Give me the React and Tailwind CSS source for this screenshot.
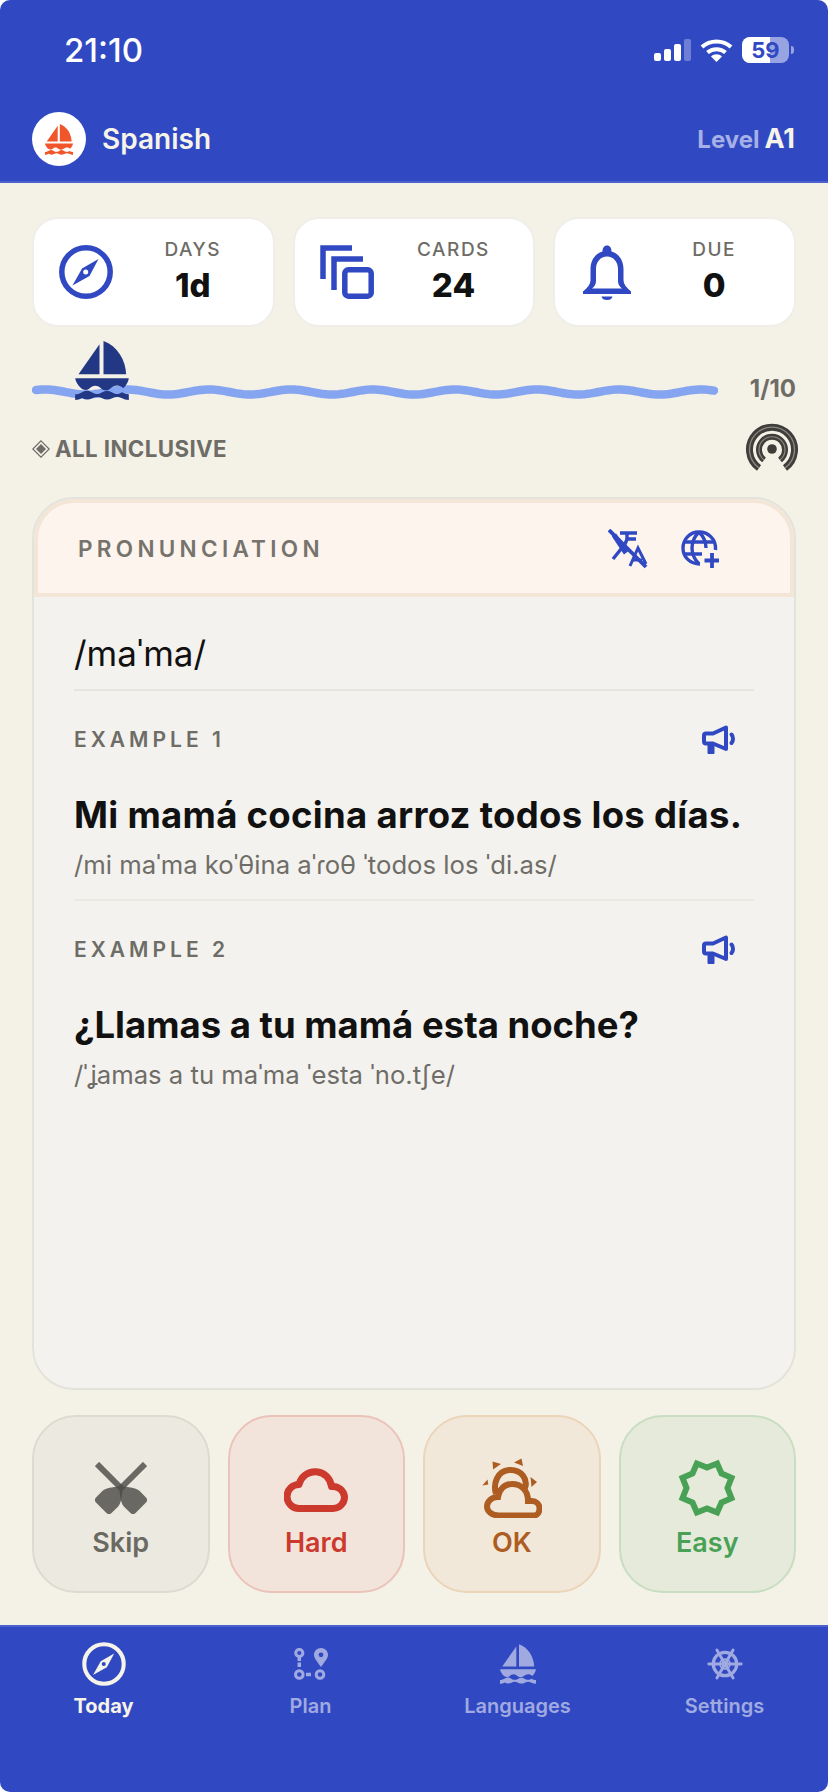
import React from "react";

const Boat = ({ color, className }) => (
  <svg viewBox="165 35 161 177" className={className} fill={color}>
    <path d="M238 45V135H175Z" />
    <path d="M250 35C292 50 316 92 318 135H250Z" />
    <path d="M165 147H326C324 158 319 168 309 177C299 166 283 166 270 178C262 184 252 184 244 178C233 166 218 166 207 178C199 184 189 182 183 177C173 168 167 158 165 147Z" />
    <path d="M165 195C173 195 180 192 187 188C197 182 207 184 215 189C226 196 236 196 246 189C256 183 266 183 275 189C286 196 296 196 305 189C312 192 319 195 326 195V212C318 212 311 210 304 206C295 202 286 202 276 207C266 212 256 212 246 207C236 202 226 202 216 207C206 212 196 212 186 206C180 209 172 212 165 212Z" />
  </svg>
);

const Compass = ({ color, hole, className, sw = 5.5 }) => (
  <svg viewBox="0 0 54 54" className={className}>
    <circle cx="27" cy="27" r="24.2" fill="none" stroke={color} strokeWidth={sw} />
    <path d="M39.500 14L30.500 31L13.500 40.500L23 23.500Z" fill={color} />
    <circle cx="26.700" cy="27" r="2.500" fill={hole} />
  </svg>
);

const Copies = ({ color, className }) => (
  <svg viewBox="0 0 54 54" className={className} fill="none" stroke={color} strokeWidth="5.5">
    <path d="M32 3H3V34" />
    <path d="M43 14H14V45" />
    <rect x="24.800" y="24.800" width="26.400" height="26.400" rx="3.500" />
  </svg>
);

const Bell = ({ color, className }) => (
  <svg viewBox="0 0 50 56" className={className}>
    <path d="M25 1.500C22 1.500 20.500 4 20.500 7.500C12.500 10 8.500 17 8.500 25V36C8.500 40 6 43.500 1 47.500V50H49V47.500C44 43.500 41.500 40 41.500 36V25C41.500 17 37.500 10 29.500 7.500C29.500 4 28 1.500 25 1.500ZM25 12.500C31.500 12.500 36 18 36 25V37C36 40 37.500 42.500 40 44.500H10C12.500 42.500 14 40 14 37V25C14 18 18.500 12.500 25 12.500Z" fill={color} fillRule="evenodd" />
    <path d="M19.500 52.500H30.500C30 55 28 56 25 56C22 56 20 55 19.500 52.500Z" fill={color} />
  </svg>
);

const Wave = () => {
  const w = 686;
  const pts = [];
  for (let x = 4; x <= w - 4; x += 3) {
    pts.push(`${x},${(8 + 2.5 * Math.cos(((x - 136) / 82) * 2 * Math.PI)).toFixed(2)}`);
  }
  return (
    <svg viewBox={`0 0 ${w} 16`} className="h-[16px] w-[686px]">
      <polyline points={pts.join(" ")} fill="none" stroke="#86A5F0" strokeWidth="8.5" strokeLinecap="round" strokeLinejoin="round" />
    </svg>
  );
};

const Radar = () => (
  <svg viewBox="0 0 54 54" className="h-[54px] w-[54px]" fill="none">
    <path d="M14 46A22.500 22.500 0 1 1 40 46" stroke="#3F3E3A" strokeWidth="7" />
    <path d="M14 46A22.500 22.500 0 1 1 40 46" stroke="#8A8880" strokeWidth="1.400" />
    <path d="M19 38A13 13 0 1 1 35 38" stroke="#3F3E3A" strokeWidth="6" />
    <path d="M19 38A13 13 0 1 1 35 38" stroke="#8A8880" strokeWidth="1.200" />
    <circle cx="27" cy="27" r="4.800" fill="#3F3E3A" />
  </svg>
);

const TranslateOff = ({ className }) => (
  <svg viewBox="0 0 40 40" className={className} fill="none" stroke="#3049C3" strokeWidth="3.400">
    <path d="M1 1L38 38" strokeWidth="3.800" />
    <path d="M5 30L17 15L20 8" />
    <path d="M12 4H29M19 4V10M19 10H28" />
    <path d="M6 6L18 24" strokeWidth="5" />
    <path d="M22 37L30 19L38 35" strokeWidth="3" />
    <path d="M25 31H34" strokeWidth="3" />
  </svg>
);

const GlobePlus = ({ className }) => (
  <svg viewBox="0 0 38 38" className={className} fill="none" stroke="#3049C3" strokeWidth="3.400">
    <path d="M34.500 20C35.500 9 27 2 18 2C8.500 2 2 9.500 2 18C2 27 9 34 19 34" />
    <path d="M18 2C13 7 11 12.500 11 18C11 23.500 13 29 18 34M18 2C23 7 25 12.500 25 18" />
    <path d="M3 12H33M3 24H21" />
    <path d="M31 23V38M23.500 30.500H38" strokeWidth="3.800" />
  </svg>
);

const Megaphone = ({ className }) => (
  <svg viewBox="0 0 34 30" className={className} fill="none" stroke="#3049C3">
    <path d="M4 8.500H11L24 2.500V24L11 18.500H4C2.800 18.500 2 17.700 2 16.500V10.500C2 9.300 2.800 8.500 4 8.500Z" strokeWidth="4" strokeLinejoin="round" />
    <path d="M6 19V28.500H12V19" fill="#3049C3" strokeWidth="1" strokeLinejoin="round" />
    <path d="M29.500 9.500C31.500 11.500 31.500 16 29.500 18" strokeWidth="4" strokeLinecap="round" />
  </svg>
);

const blade = "M26 22C24 27 15 35 15 41V50Q15 54 19 54H33Q37 54 37 50V41C37 35 28 27 26 22Z";
const Oars = () => (
  <svg viewBox="0 0 52 52" className="h-[52px] w-[52px]">
    <g transform="rotate(-45 26 26)" fill="#4A4943" opacity="0.8">
      <rect x="23" y="-8" width="6" height="34" />
      <path d={blade} />
    </g>
    <g transform="rotate(45 26 26)" fill="#4A4943" opacity="0.8">
      <rect x="23" y="-8" width="6" height="34" />
      <path d={blade} />
    </g>
  </svg>
);

const Cloud = () => (
  <svg viewBox="0 0 64 47" className="h-[47px] w-[64px]" fill="none" stroke="#CC3A2E" strokeWidth="7">
    <path d="M15 43.500H49A11.500 11.500 0 0 0 60.500 32A11.500 11.500 0 0 0 47.500 21.500A16.500 16.500 0 0 0 15 19.500A12 12 0 0 0 15 43.500Z" strokeLinejoin="round" />
  </svg>
);

const CloudSun = () => (
  <svg viewBox="0 0 60 60" className="h-[60px] w-[60px]" fill="none" stroke="#AD5C22">
    <path d="M14 36C11 26 15 13 27 12C40 11 46 22 43 30" strokeWidth="6" />
    <path d="M17 57.500H52C55.500 57.500 57.500 54 57.500 50.500C57.500 46 54 43 50 43H46C46 32 39 26 30 26C22 26 17 32 16 39C9 39 5 44 5 48.500C5 53.500 10 57.500 17 57.500Z" strokeWidth="6" fill="#F2E8DA" />
    <path d="M10.500 3.500L19 6L11 11.500Z" fill="#AD5C22" stroke="none" />
    <path d="M32 4.500L39.500 0.500L41 8Z" fill="#AD5C22" stroke="none" />
    <path d="M48.500 19L55 24L49.500 29Z" fill="#AD5C22" stroke="none" />
    <path d="M6 27L0 27L6 22Z" fill="#AD5C22" stroke="none" transform="rotate(-8 3 25)" />
  </svg>
);

const starPts = Array.from({ length: 16 }, (_, i) => {
  const a = (i * Math.PI) / 8 - Math.PI / 2;
  const r = i % 2 === 0 ? 20.5 : 26.5;
  return `${(29 + r * Math.cos(a)).toFixed(2)},${(29 + r * Math.sin(a)).toFixed(2)}`;
}).join(" ");

const Seal = () => (
  <svg viewBox="0 0 58 58" className="h-[58px] w-[58px]">
    <polygon points={starPts} fill="none" stroke="#49A156" strokeWidth="6" strokeLinejoin="miter" />
  </svg>
);

const PlanIcon = ({ className }) => (
  <svg viewBox="0 0 34 33" className={className} fill="none" stroke="#A0AAE0">
    <circle cx="5.300" cy="5" r="3.600" strokeWidth="3" />
    <path d="M5.300 9V13" strokeWidth="3.500" />
    <path d="M5.300 14.500V19" strokeWidth="3.500" />
    <circle cx="5.300" cy="26.500" r="3.800" strokeWidth="3" />
    <path d="M12 26.500H17" strokeWidth="3.500" />
    <circle cx="26" cy="26.500" r="3.800" strokeWidth="3" />
    <path d="M27 19C23.500 14 20 10.500 20 6.800C20 3 23 0 27 0C31 0 34 3 34 6.800C34 10.500 30.500 14 27 19Z" fill="#A0AAE0" stroke="none" />
    <circle cx="27" cy="6.800" r="2.400" fill="#3049C3" stroke="none" />
  </svg>
);

const Helm = ({ className }) => (
  <svg viewBox="0 0 40 40" className={className} fill="none" stroke="#A0AAE0" strokeLinecap="round">
    <circle cx="20" cy="20" r="13" strokeWidth="3.600" />
    <circle cx="20" cy="20" r="3.500" fill="#A0AAE0" stroke="none" />
    <path d="M2 20H38M11 4.500L29 35.500M29 4.500L11 35.500" strokeWidth="3.200" />
    <circle cx="20" cy="20" r="5.500" strokeWidth="2" />
  </svg>
);

const Stat = ({ icon, label, value }) => (
  <div className="flex h-[110px] items-center rounded-[26px] border-2 border-[#EFEEE9] bg-white pl-[25px]">
    <div className="flex w-[54px] justify-center">{icon}</div>
    <div className="flex flex-1 flex-col items-center pb-[2px]">
      <div className="text-[19px] leading-[24px] font-medium tracking-[1.5px] text-[#6E6C66]">{label}</div>
      <div className="mt-[4px] text-[33px] leading-[38px] font-extrabold text-[#111]">{value}</div>
    </div>
  </div>
);

const Example = ({ label, sentence, ipa, divider, tracking }) => (
  <div className={divider ? "border-b-2 border-[#EBE9E4] pb-[17px]" : ""}>
    <div className="flex h-[38px] items-center justify-between pr-[18px]">
      <div className="text-[21px] font-semibold tracking-[4px] text-[#6E6C66]">{label}</div>
      <Megaphone className="h-[30px] w-[34px]" />
    </div>
    <div className={`mt-[34px] text-[36.500px] leading-[44px] font-bold whitespace-nowrap text-[#111] ${tracking}`}>{sentence}</div>
    <div className="mt-[11px] text-[25.700px] leading-[34px] text-[#6F6D68]">{ipa}</div>
  </div>
);

const Action = ({ icon, label, classes }) => (
  <div className={`flex h-[178px] flex-col items-center rounded-[44px] border-2 ${classes}`}>
    <div className="mt-[40px] flex h-[62px] items-center justify-center">{icon}</div>
    <div className="mt-[9px] text-[27px] leading-[30px] font-semibold">{label}</div>
  </div>
);

const Tab = ({ icon, label, active }) => (
  <div className="flex flex-col items-center">
    <div className="flex h-[46px] items-center justify-center">{icon}</div>
    <div className={`mt-[6px] text-[20px] leading-[26px] ${active ? "font-bold text-[#F6F3E8]" : "font-semibold text-[#A0AAE0]"}`}>{label}</div>
  </div>
);

export default function App() {
  return (
    <div className="flex h-[1792px] w-[828px] flex-col overflow-hidden rounded-[10px] bg-[#F4F1E6] [font-family:Inter,'Noto_Sans',sans-serif]">
      <header className="h-[183px] shrink-0 border-b-2 border-[#4B62CE] bg-[#3049C3] text-white">
        <div className="flex h-[100px] items-center justify-between pr-[34px] pl-[64px]">
          <div className="text-[33px] leading-[40px] font-medium">21:10</div>
          <div className="flex items-center">
            <div className="flex h-[22px] items-end gap-[3px]">
              <div className="h-[8px] w-[7px] rounded-[2px] bg-white" />
              <div className="h-[12px] w-[7px] rounded-[2px] bg-white" />
              <div className="h-[17px] w-[7px] rounded-[2px] bg-white" />
              <div className="h-[22px] w-[7px] rounded-[2px] bg-white/30" />
            </div>
            <svg viewBox="0 0 33 24" className="ml-[9px] h-[24px] w-[33px]" fill="none" stroke="#fff" strokeWidth="4">
              <path d="M2 9C10 1.500 23 1.500 31 9" />
              <path d="M7.500 14.500C12.500 10 20.500 10 25.500 14.500" />
              <path d="M16.500 24L11 18.500C14 15.500 19 15.500 22 18.500Z" fill="#fff" stroke="none" />
            </svg>
            <div className="relative ml-[9px] h-[26px] w-[47px] overflow-hidden rounded-[8px] bg-white/50">
              <div className="h-full w-[28px] bg-white" />
              <div className="absolute inset-0 flex items-center justify-center text-[22px] leading-none font-bold text-[#3049C3]">59</div>
            </div>
            <div className="ml-[2px] h-[8px] w-[3px] rounded-r-[3px] bg-white/50" />
          </div>
        </div>
        <div className="mt-[12px] flex h-[54px] items-center justify-between pr-[33px] pl-[32px]">
          <div className="flex items-center">
            <div className="flex h-[54px] w-[54px] items-center justify-center rounded-full bg-white">
              <Boat color="#F0562A" className="h-[31px] w-[28px]" />
            </div>
            <div className="ml-[16px] text-[28px] leading-[36px] font-semibold text-[#F6F3E8]">Spanish</div>
          </div>
          <div className="flex items-baseline">
            <span className="text-[24px] font-bold text-[#A6B0E6]">Level</span>
            <span className="ml-[5px] text-[27px] font-bold text-[#F6F3E8]">A1</span>
          </div>
        </div>
      </header>

      <main className="flex min-h-0 flex-1 flex-col px-[32px] pt-[34px]">
        <div className="grid grid-cols-3 gap-[18px]">
          <Stat icon={<Compass color="#3049C3" hole="#fff" className="h-[54px] w-[54px]" />} label="DAYS" value="1d" />
          <Stat icon={<Copies color="#3049C3" className="h-[54px] w-[54px]" />} label="CARDS" value="24" />
          <Stat icon={<Bell color="#3049C3" className="h-[56px] w-[50px]" />} label="DUE" value="0" />
        </div>

        <div className="relative mt-[14px] flex h-[60px] items-end justify-between">
          <div className="pb-[1px]"><Wave /></div>
          <div className="text-[24px] leading-[24px] font-bold text-[#6E6C66]">1/10</div>
          <Boat color="#223885" className="absolute top-0 left-[43px] h-[59px] w-[54px]" />
        </div>

        <div className="mt-[21px] flex h-[54px] items-center justify-between">
          <div className="flex items-center">
            <svg viewBox="0 0 18 18" className="h-[18px] w-[18px]">
              <path d="M9 .8L17.200 9L9 17.200L.8 9Z" fill="none" stroke="#6E6C66" strokeWidth="1.200" />
              <path d="M9 4L14 9L9 14L4 9Z" fill="#6E6C66" />
            </svg>
            <div className="ml-[5px] text-[22.300px] font-bold tracking-[0.4px] text-[#6E6C66]">ALL INCLUSIVE</div>
          </div>
          <div className="-mr-[3px]"><Radar /></div>
        </div>

        <section className="mt-[21px] flex min-h-0 flex-1 flex-col overflow-hidden rounded-[42px] border-2 border-[#E3E3DC] bg-[#F4F2EE]">
          <div className="flex h-[98px] shrink-0 items-center rounded-t-[40px] border-[4px] border-[#F4E6D6] bg-[#FCF4ED] pt-[2px] pr-[71px] pl-[40px]">
            <div className="flex-1 text-[22.500px] font-semibold tracking-[4.300px] text-[#76726C]">PRONUNCIATION</div>
            <TranslateOff className="h-[40px] w-[40px]" />
            <GlobePlus className="ml-[33px] h-[38px] w-[38px]" />
          </div>
          <div className="px-[40px]">
            <div className="border-b-2 border-[#E6E5E0] pt-[31px] pb-[11px] text-[35px] leading-[50px] text-[#111]">/maˈma/</div>
            <div className="mt-[30px]">
              <Example divider tracking="tracking-[0.3px]" label="EXAMPLE 1" sentence="Mi mamá cocina arroz todos los días." ipa="/mi maˈma koˈθina aˈɾoθ ˈtodos los ˈdi.as/" />
            </div>
            <div className="mt-[30px]">
              <Example tracking="tracking-[0px]" label="EXAMPLE 2" sentence="¿Llamas a tu mamá esta noche?" ipa="/ˈʝamas a tu maˈma ˈesta ˈno.tʃe/" />
            </div>
          </div>
        </section>

        <div className="mt-[25px] mb-[32px] grid grid-cols-4 gap-[18px]">
          <Action icon={<Oars />} label="Skip" classes="border-[#DDDBCF] bg-[#ECE9E1] text-[#6B6A62]" />
          <Action icon={<Cloud />} label="Hard" classes="border-[#EBC3BB] bg-[#F2E4DB] text-[#CC3A2E]" />
          <Action icon={<CloudSun />} label="OK" classes="border-[#EBD4B8] bg-[#F2E8DA] text-[#AD5C22]" />
          <Action icon={<Seal />} label="Easy" classes="border-[#C9DDC2] bg-[#E6EADB] text-[#49A156]" />
        </div>
      </main>

      <nav className="grid h-[167px] shrink-0 grid-cols-4 border-t-2 border-[#4B62CE] bg-[#3049C3] pt-[14px]">
        <Tab active icon={<Compass color="#F6F3E8" hole="#3049C3" sw={5} className="h-[44px] w-[44px]" />} label="Today" />
        <Tab icon={<PlanIcon className="h-[33px] w-[34px]" />} label="Plan" />
        <Tab icon={<Boat color="#A0AAE0" className="h-[40px] w-[36px]" />} label="Languages" />
        <Tab icon={<Helm className="h-[36px] w-[38px]" />} label="Settings" />
      </nav>
    </div>
  );
}
